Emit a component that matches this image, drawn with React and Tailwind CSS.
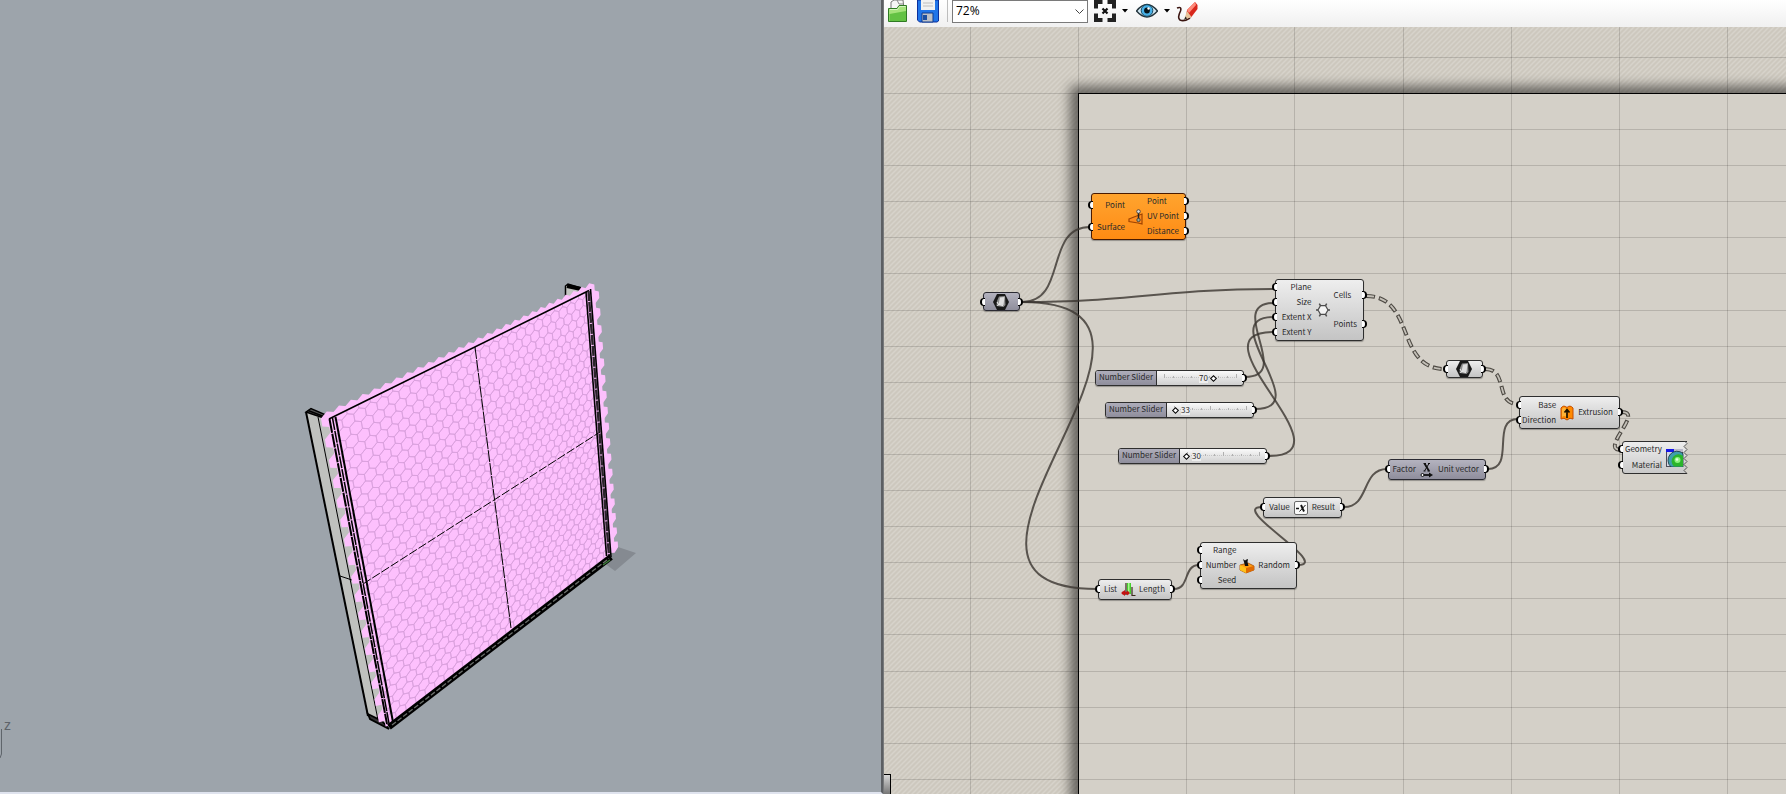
import React, { useState } from 'react';

const gripBase = 'absolute top-1/2 -mt-1 h-2 w-[5px] border border-black bg-white';

const Grip = ({ side }) => (
  <span
    className={
      side === 'left'
        ? `${gripBase} -left-[4px] rounded-l-full border-r-0 border-l-2`
        : `${gripBase} -right-[4px] rounded-r-full border-r-2 border-l-0`
    }
  />
);

const BrepIcon = () => (
  <svg width="18" height="16" viewBox="0 0 18 16">
    <polygon points="5,0 13,0 17,8 13,16 5,16 1,8" fill="#191919" />
    <polygon points="7,2.500 13,2 13.500,11 11.500,13 4.500,12 5,7" fill="#8d8d8d" />
    <polygon points="8,3.500 12.500,3 11.500,11 6.500,10.500" fill="#dedede" />
    <path d="M5 8L6.500 10.500L5.500 12M6.500 10.500L11 11.500" stroke="#f0f0f0" strokeWidth="1" fill="none" />
  </svg>
);

const ClosestIcon = () => (
  <svg width="16" height="16" viewBox="0 0 16 16">
    <path d="M1 10L6 8L14 5V15L10 14L1 12.500Z" fill="#ff8b1c" stroke="#a04400" strokeWidth="1.2" />
    <path d="M10.5 3V10" stroke="#222" strokeWidth="1.5" />
    <circle cx="10.5" cy="2.5" r="1.8" fill="#ddd" stroke="#333" strokeWidth=".8" />
    <circle cx="10.5" cy="11" r="1.7" fill="#9a9" stroke="#333" strokeWidth=".8" />
  </svg>
);

const HexIcon = () => (
  <svg width="14" height="14" viewBox="0 0 14 14">
    <path d="M4.500 2.700L9.500 2.700L12 7L9.500 11.300L4.500 11.300L2 7Z" fill="#f4f4f4" stroke="#4c4c4c" strokeWidth="1.2" />
    <path d="M4.500 2.700L3.300 .7M9.500 2.700L10.700 .7M12 7H14M9.500 11.300L10.700 13.300M4.500 11.300L3.300 13.300M2 7H0" stroke="#4c4c4c" strokeWidth="1.5" />
  </svg>
);

const ExtrudeIcon = () => (
  <svg width="14" height="16" viewBox="0 0 14 16">
    <path d="M1 3Q3.500 -.5 7 2.500Q10 -.5 13 3V14Q10 12 7 15Q4 12 1 14Z" fill="#ff8a00" stroke="#c44d00" strokeWidth="1" />
    <path d="M2 4Q4 1 6.500 4V12Q4 10 2 12Z" fill="#ffb338" />
    <path d="M7 5V13M4.500 7.500L7 4.500L9.500 7.500" stroke="#1c1200" strokeWidth="1.7" fill="none" />
  </svg>
);

const PreviewIcon = () => (
  <svg width="18" height="18" viewBox="0 0 18 18">
    <rect x=".5" y=".5" width="16" height="17" fill="#d3d8e6" stroke="#4d4d58" />
    <rect x="0" y="0" width="17" height="3" fill="#b9b9c8" />
    <rect x="0" y="0" width="8" height="3" fill="#1717e8" />
    <path d="M17 4.500V18H5A8 8 0 0 1 17 4.500Z" fill="#3f9fae" stroke="#15323c" strokeWidth=".8" />
    <path d="M17 7V17.500H8A6 6 0 0 1 17 7Z" fill="#2bb52b" />
    <circle cx="11.500" cy="11" r="3" fill="#8cf37c" />
    <circle cx="11" cy="10.500" r="1.300" fill="#e4ffe0" />
  </svg>
);

const UnitXIcon = () => (
  <svg width="14" height="16" viewBox="0 0 14 16">
    <path d="M4.500 1.500L9 9" stroke="#111" strokeWidth="1.800" />
    <path d="M9 1.500L4.500 9" stroke="#111" strokeWidth="1" />
    <path d="M3.500 1.500H6M8 1.500H10M3.500 9H5.500M7.500 9H10" stroke="#111" strokeWidth="1" />
    <path d="M3 13H10" stroke="#111" strokeWidth="1.800" />
    <path d="M9 10.500L13 13L9 15.500Z" fill="#111" />
    <circle cx="2.500" cy="13" r="1.500" fill="#fff" stroke="#111" />
  </svg>
);

const NegateIcon = () => (
  <svg width="14" height="14" viewBox="0 0 14 14">
    <rect x=".5" y=".5" width="13" height="13" rx="1.500" fill="#fafafa" stroke="#6a6a6a" />
    <path d="M2 7.500H5" stroke="#111" strokeWidth="1.500" />
    <path d="M7 4L10 10.500" stroke="#111" strokeWidth="1.900" />
    <path d="M11.500 4L5.500 10.500" stroke="#111" strokeWidth="1" />
  </svg>
);

const RandomIcon = () => (
  <svg width="16" height="16" viewBox="0 0 16 16">
    <polygon points="1,7 9,5 15,8 15,12 7,15 1,12" fill="#ff9d12" stroke="#a84d00" strokeWidth=".8" />
    <polygon points="7,10 15,8 15,12 7,15" fill="#e06a00" />
    <polygon points="1,7 7,10 7,15 1,12" fill="#ffc21a" />
    <path d="M4 1L6 2.500L7.500 1.500L9 1L8.500 4L9.500 8H6L5 4Z" fill="#111" />
  </svg>
);

const ListIcon = () => (
  <svg width="15" height="15" viewBox="0 0 15 15">
    <rect x="6" y="1" width="4" height="11" fill="#45d02c" />
    <rect x="7" y="1" width="1.500" height="11" fill="#a8f590" />
    <path d="M5 1V13M11 5V13.500H14.500" stroke="#3b2a1c" strokeWidth="1.200" fill="none" />
    <path d="M1 11H8" stroke="#c31212" strokeWidth="2.500" />
    <path d="M0 11L4 8V14ZM9 11L6 8.500V13.500Z" fill="#c31212" />
  </svg>
);

// Component capsules on the canvas
const nodes = [
  { id: 'surface', x: 99, y: 265, w: 37, h: 19, tone: 'selected', icon: <BrepIcon />, inputs: [''], outputs: [''] },
  { id: 'closest', x: 207, y: 166, w: 95, h: 47, tone: 'warning', icon: <ClosestIcon />, inputs: ['Point', 'Surface'], outputs: ['Point', 'UV Point', 'Distance'] },
  { id: 'hexgrid', x: 391, y: 252, w: 89, h: 62, tone: 'normal', icon: <HexIcon />, inputs: ['Plane', 'Size', 'Extent X', 'Extent Y'], outputs: ['Cells', 'Points'] },
  { id: 'cells', x: 562, y: 333, w: 37, h: 18, tone: 'normal', icon: <BrepIcon />, inputs: [''], outputs: [''] },
  { id: 'extrude', x: 635, y: 369, w: 101, h: 33, tone: 'normal', icon: <ExtrudeIcon />, inputs: ['Base', 'Direction'], outputs: ['Extrusion'] },
  { id: 'unit', x: 504, y: 432, w: 98, h: 21, tone: 'selected', icon: <UnitXIcon />, inputs: ['Factor'], outputs: ['Unit vector'] },
  { id: 'negate', x: 379, y: 470, w: 79, h: 21, tone: 'normal', icon: <NegateIcon />, inputs: ['Value'], outputs: ['Result'] },
  { id: 'random', x: 316, y: 515, w: 97, h: 47, tone: 'normal', icon: <RandomIcon />, inputs: ['Range', 'Number', 'Seed'], outputs: ['Random'] },
  { id: 'list', x: 214, y: 552, w: 74, h: 21, tone: 'normal', icon: <ListIcon />, inputs: ['List'], outputs: ['Length'] },
];

const tones = {
  normal: 'border-[#2e2e2e] bg-linear-to-b from-[#eeeeee] to-[#c4c4c4]',
  selected: 'border-[#2b2b33] bg-linear-to-b from-[#b4b3bf] to-[#8f8e9c]',
  warning: 'border-[#4a1a00] bg-linear-to-b from-[#ffa42e] to-[#ff8b12]',
};

const Node = ({ node }) => {
  const bare = node.inputs[0] === '';
  return (
    <div
      className={`absolute flex items-stretch rounded-[3px] border shadow-[0_1px_1px_rgba(0,0,0,0.3)] ${
        bare ? 'justify-center' : 'justify-between'
      } ${tones[node.tone]}`}
      style={{ left: node.x, top: node.y, width: node.w, height: node.h }}
    >
      <ul className={bare ? 'absolute inset-y-0 left-0 flex flex-col' : 'flex min-w-0 flex-1 flex-col pb-px'}>
        {node.inputs.map((name) => (
          <li key={name} className="relative flex flex-1 items-center justify-end">
            <Grip side="left" />
            {name}
          </li>
        ))}
      </ul>
      <div className={bare ? 'flex items-center' : 'flex w-[22px] shrink-0 items-center justify-center'}>{node.icon}</div>
      <ul className={bare ? 'absolute inset-y-0 right-0 flex flex-col' : 'flex flex-col pb-px'}>
        {node.outputs.map((name) => (
          <li key={name} className={`relative flex flex-1 items-center ${bare ? '' : 'pr-1.5'}`}>
            {name}
            <Grip side="right" />
          </li>
        ))}
      </ul>
    </div>
  );
};

// Custom preview capsule, the right side has a torn edge instead of outputs
const PreviewNode = () => (
  <div className="absolute top-[414px] left-[738px] flex h-[33px] w-[66px]">
    <svg className="absolute inset-0" width="66" height="33" viewBox="0 0 66 33">
      <defs>
        <linearGradient id="capsule" x1="0" y1="0" x2="0" y2="1">
          <stop offset="0" stopColor="#eeeeee" />
          <stop offset="1" stopColor="#c8c8c8" />
        </linearGradient>
      </defs>
      <path
        d="M65 .5H3Q.5 .5 .5 3V30Q.5 32.500 3 32.500H65L62 29.500L65 26.500L62 23.500L65 20.500L62 17.500L65 14.500L62 11.500L65 8.500L62 5.500L65 2.500Z"
        fill="url(#capsule)"
      />
      <path d="M65 .5H3Q.5 .5 .5 3V30Q.5 32.500 3 32.500H65" fill="none" stroke="#2e2e2e" />
      <path
        d="M65 32.500L62 29.500L65 26.500L62 23.500L65 20.500L62 17.500L65 14.500L62 11.500L65 8.500L62 5.500L65 2.500L63 .5"
        fill="none"
        stroke="#555"
      />
    </svg>
    <ul className="relative flex w-10 flex-col pb-px">
      {['Geometry', 'Material'].map((name) => (
        <li key={name} className="relative flex flex-1 items-center justify-end">
          <Grip side="left" />
          {name}
        </li>
      ))}
    </ul>
    <div className="relative ml-1 flex items-center">
      <PreviewIcon />
    </div>
  </div>
);

const sliders = [
  { id: 'size', x: 211, y: 343, min: 0, start: 70, label: 'left-[103px]', pad: 'left-[63px]' },
  { id: 'extent-x', x: 221, y: 375, min: 33, start: 33, label: 'left-[75px]', pad: 'left-[67px]' },
  { id: 'extent-y', x: 234, y: 421, min: 30, start: 30, label: 'left-[73px]', pad: 'left-[65px]' },
];

const NumberSlider = ({ slider }) => {
  const [value, setValue] = useState(slider.start);
  return (
    <div
      className="absolute flex h-4 w-[149px] rounded-[3px] border border-[#2e2e2e] bg-linear-to-b from-[#fafafa] to-[#cfcfcf] shadow-[0_1px_1px_rgba(0,0,0,0.3)]"
      style={{ left: slider.x, top: slider.y }}
    >
      <label
        htmlFor={slider.id}
        className="flex w-[61px] items-center justify-center rounded-l-[2px] border-r border-[#2e2e2e] bg-linear-to-b from-[#aeadba] to-[#8f8e9c] pb-[2px]"
      >
        Number Slider
      </label>
      <svg className="absolute top-0 left-[68px]" width="74" height="14">
        <path d="M0 6.500H73" stroke="#c4c4c4" strokeDasharray="1 1" />
        <path d="M.5 3V7M9.500 5V7M18.500 5V7M27.500 5V7M36.500 3V7M45.500 5V7M54.500 5V7M63.500 5V7M72.500 3V7" stroke="#b0b0b0" />
      </svg>
      <input
        id={slider.id}
        type="range"
        min={slider.min}
        max="100"
        value={value}
        onChange={(e) => setValue(Number(e.target.value))}
        className={`absolute top-0 h-[14px] w-[79px] appearance-none bg-transparent [&::-webkit-slider-thumb]:h-[5px] [&::-webkit-slider-thumb]:w-[5px] [&::-webkit-slider-thumb]:rotate-45 [&::-webkit-slider-thumb]:appearance-none [&::-webkit-slider-thumb]:border [&::-webkit-slider-thumb]:border-black [&::-webkit-slider-thumb]:bg-white ${slider.pad}`}
      />
      <output htmlFor={slider.id} className={`pointer-events-none absolute top-px flex h-[11px] items-center bg-[#eeeeee] ${slider.label}`}>
        {value}
      </output>
      <span className="absolute inset-y-0 right-0">
        <Grip side="right" />
      </span>
    </div>
  );
};

const wire = (x1, y1, x2, y2, d) => `M${x1} ${y1}C${x1 + d} ${y1} ${x2 - d} ${y2} ${x2} ${y2}`;

const wires = [
  wire(138, 275, 206, 200, 46),
  wire(138, 275, 390, 262, 110),
  wire(138, 275, 213, 562, 210),
  wire(361, 350, 390, 276, 50),
  wire(371, 382, 390, 290, 63),
  wire(384, 429, 390, 305, 88),
  wire(290, 562, 315, 538, 16),
  wire(414, 538, 378, 480, 34),
  wire(460, 480, 503, 442, 26),
  wire(604, 442, 634, 392, 28),
];

const treeWires = [
  wire(482, 269, 561, 342, 50),
  wire(601, 342, 634, 377, 24),
  wire(738, 385, 737, 423, 22),
];

const columns = Array.from({ length: 20 }, (_, i) => Math.floor(86.3 + i * 108.2));
const rows = Array.from({ length: 40 }, (_, i) => Math.floor(30.3 + i * 36.1));

const CanvasBackdrop = () => (
  <svg className="absolute inset-0 h-full w-full">
    <defs>
      <pattern id="hatch" width="5" height="5" patternUnits="userSpaceOnUse">
        <rect width="5" height="5" fill="#cdc8be" />
        <path d="M-1 6L6 -1M-1 1L1 -1M4 6L6 4" stroke="#d7d3cb" strokeWidth="1.500" />
      </pattern>
      <filter id="soft" x="-10%" y="-10%" width="120%" height="120%">
        <feGaussianBlur stdDeviation="6" />
      </filter>
    </defs>
    <rect width="100%" height="100%" fill="url(#hatch)" />
    <rect x="186" y="59" width="2000" height="2000" fill="#000" opacity=".5" filter="url(#soft)" />
    <rect x="194.500" y="66.500" width="2000" height="2000" fill="#d4d0c8" />
    <g stroke="#000" strokeOpacity=".14" shapeRendering="crispEdges">
      {columns.map((x) => (
        <line key={x} x1={x + 0.5} x2={x + 0.5} y1="0" y2="100%" />
      ))}
      {rows.map((y) => (
        <line key={y} y1={y + 0.5} y2={y + 0.5} x1="0" x2="100%" />
      ))}
    </g>
    <rect x="194.500" y="66.500" width="2000" height="2000" fill="none" stroke="#000" />
    <g fill="none" stroke="#3a352f" strokeOpacity=".8" strokeWidth="2">
      {wires.map((d) => (
        <path key={d} d={d} />
      ))}
    </g>
    {treeWires.map((d) => (
      <g key={d} fill="none">
        <path d={d} stroke="#4d4943" strokeWidth="4" strokeDasharray="9 4" />
        <path d={d} stroke="#c4c0b8" strokeWidth="1.800" strokeDasharray="7 6" strokeDashoffset="-1" />
      </g>
    ))}
  </svg>
);

// Projects (u, v) on the wall to the viewport, both from 0 to 1
const corners = { a: [333, 417], b: [590, 290], c: [611, 557], d: [391, 728] };

const project = (u, v) => {
  const [x0, y0] = corners.a;
  const [x1, y1] = corners.b;
  const [x2, y2] = corners.c;
  const [x3, y3] = corners.d;
  const dx1 = x1 - x2;
  const dx2 = x3 - x2;
  const dx3 = x0 - x1 + x2 - x3;
  const dy1 = y1 - y2;
  const dy2 = y3 - y2;
  const dy3 = y0 - y1 + y2 - y3;
  const det = dx1 * dy2 - dx2 * dy1;
  const g = (dx3 * dy2 - dx2 * dy3) / det;
  const h = (dx1 * dy3 - dx3 * dy1) / det;
  const w = g * u + h * v + 1;
  return [
    ((x1 - x0 + g * x1) * u + (x3 - x0 + h * x3) * v + x0) / w,
    ((y1 - y0 + g * y1) * u + (y3 - y0 + h * y3) * v + y0) / w,
  ];
};

const COLS = 27;
const ROWS = 34;

const hexagons = [];
for (let r = 0; r < ROWS; r++) {
  for (let c = 0; c <= COLS; c++) {
    const u = ((c + (r % 2 ? 0.5 : 0)) / COLS) * 1.014 - 0.014;
    const v = r / ROWS;
    const points = [0, 1, 2, 3, 4, 5].map((k) => {
      const angle = (Math.PI / 3) * k + Math.PI / 6;
      const [x, y] = project(u + (Math.cos(angle) * 0.585) / COLS, v + (Math.sin(angle) * 0.667) / ROWS);
      return `${x.toFixed(1)},${y.toFixed(1)}`;
    });
    hexagons.push(points.join(' '));
  }
}

const Viewport = () => (
  <section className="relative w-[49.44%] shrink-0 overflow-hidden border-r-2 border-b-2 border-r-[#5c5f63] border-b-[#dfe3ee] bg-[#9da4ab]">
    <svg className="absolute top-0 left-0" width="881" height="792" viewBox="0 0 881 792">
      <polygon points="607,551 618,547 636,553 615,571 604,563" fill="#858a91" />
      <polygon points="306,412 311,408 326,415 345,440 393,725 381,722 368,716" fill="#bfc1be" />
      <polygon points="565,286 568,284 581,288 580,296 565,300" fill="#c3c5c2" />
      <path d="M565.500 297V286L568 284L581 288" fill="none" stroke="#000" strokeWidth="1.500" />
      <path d="M567 286L581 289" stroke="#000" strokeWidth="4" />
      <path d="M306 412L311 408.500L326 415L324 418Z" fill="#555" stroke="#000" strokeWidth="1.500" />
      <path d="M308 410.500L325 417" stroke="#000" strokeWidth="1.500" />
      <path d="M306 412L368 716" stroke="#000" strokeWidth="2" />
      <path d="M318 417L378 720" stroke="#000" strokeWidth="1" />
      <path d="M340 576L355 581" stroke="#000" strokeWidth="1" />
      <path d="M368 714L370 719L389 729L382 721Z" fill="#333" stroke="#000" strokeWidth="1.800" />
      <polygon points="330,416 590,288 611,557 391,727" fill="#fdc0fd" />
      <g fill="#fdc0fd">
        {hexagons.map((points) => (
          <polygon key={points} points={points} stroke="#fdc0fd" strokeWidth="1.5" />
        ))}
      </g>
      <clipPath id="wall">
        <polygon points="333,417 590,290 611,557 391,728" />
      </clipPath>
      <g fill="none" stroke="#d8a0dc" strokeWidth=".8" clipPath="url(#wall)">
        {hexagons.map((points) => (
          <polygon key={points} points={points} />
        ))}
      </g>
      <path d="M329 419L335 416L589 290.500" fill="none" stroke="#000" strokeWidth="1.600" />
      <g stroke="#000" fill="none">
        <path d="M329.500 419L387 724" strokeWidth="2" strokeDasharray="14 1" />
        <path d="M332.500 418L389.500 726" strokeWidth="1.500" strokeDasharray="12 1" />
        <path d="M335.500 417L393 722" strokeWidth="2" />
        <path d="M586 292L606.500 556" strokeWidth="1.600" />
        <path d="M588.500 291L609 556" strokeWidth="2.400" strokeDasharray="10 1" stroke="#2b242b" />
        <path d="M590.500 289L611 557" strokeWidth="1.600" />
        <path d="M475 347L511 628" strokeDasharray="12 1" />
        <path d="M363 584L600 432" strokeDasharray="9 2" />
      </g>
      <path d="M389 727L611 557" stroke="#000" strokeWidth="6" />
      <path d="M392 725L609 558.500" stroke="#6a6e6a" strokeWidth="1.300" strokeDasharray="5 2" />
      <path d="M603 565L610 560" stroke="#3b7d38" strokeWidth="1.500" />
      <path d="M1.500 729V754L0 758" fill="none" stroke="#5f656b" strokeWidth="1" />
    </svg>
    <span className="absolute bottom-[60px] left-1 font-['Liberation_Sans'] text-sm leading-none text-[#5d636a]">z</span>
  </section>
);

const Caret = () => (
  <svg width="6" height="4" viewBox="0 0 6 4">
    <path d="M0 0H6L3 3.500Z" fill="#000" />
  </svg>
);

const Toolbar = () => (
  <header className="flex h-[27px] shrink-0 items-start bg-linear-to-b from-white to-[#f0f0f0] pl-1">
    <button type="button" aria-label="Open" className="mr-[9px]">
      <svg width="20" height="23" viewBox="0 0 20 23">
        <path d="M3 9V2L6 0H15L16 9Z" fill="#f6f6f6" stroke="#777" />
        <path d="M9 0L11 4H15" fill="none" stroke="#888" />
        <path d="M.5 21.500V8.500H9L11 5.500H18.500V21.500Z" fill="#a5e37c" stroke="#2f7a24" />
        <path d="M1.500 14L18 11V21H1.500Z" fill="#63c244" />
        <path d="M2 9.500H9.500L11.500 6.500H17.500" stroke="#d2f5bd" fill="none" />
      </svg>
    </button>
    <button type="button" aria-label="Save" className="mr-2">
      <svg width="22" height="23" viewBox="0 0 22 23">
        <path d="M0.500 0H21.500V21L20 22H2.500L.5 20Z" fill="#2075e8" stroke="#0a2f9c" />
        <path d="M4 0H18V10H4Z" fill="#f1f1f1" />
        <path d="M6 3H16M6 6H16" stroke="#bdbdbd" />
        <path d="M5 13H16V22H5Z" fill="#bcc0c6" stroke="#0f3c90" />
        <rect x="6" y="15" width="4" height="5" fill="#1b4ea0" />
      </svg>
    </button>
    <div className="mr-1 h-[22px] w-px bg-[#bdbdbd]" />
    <div className="relative mr-[6px] w-[136px]">
      <select
        aria-label="Zoom"
        defaultValue="72"
        className="block h-[23px] w-full appearance-none border border-[#7a7a7a] bg-white pl-[3px] pb-px font-['Open_Sans',sans-serif] text-xs text-black"
      >
        <option value="72">72%</option>
        <option value="100">100%</option>
        <option value="150">150%</option>
      </select>
      <svg className="pointer-events-none absolute top-2 right-1" width="9" height="7" viewBox="0 0 9 7">
        <path d="M.5 1.500L4.500 5.500L8.500 1.500" fill="none" stroke="#444" />
      </svg>
    </div>
    <button type="button" aria-label="Zoom extents" className="flex h-[22px] items-center gap-[6px]">
      <svg width="22" height="22" viewBox="0 0 22 22">
        <path d="M2 8.500V2H8.500M13.500 2H20V8.500M20 13.500V20H13.500M8.500 20H2V13.500" fill="none" stroke="#222" strokeWidth="4" />
        <path d="M8.500 8.500L13.500 13.500M13.500 8.500L8.500 13.500" stroke="#111" strokeWidth="2.200" />
      </svg>
      <Caret />
    </button>
    <button type="button" aria-label="Named views" className="ml-2 flex h-[22px] items-center gap-[6px]">
      <svg width="22" height="16" viewBox="0 0 22 16">
        <path d="M.5 8Q11 -5 21.500 8Q11 20 .5 8Z" fill="#cfe6f1" stroke="#21323a" strokeWidth="1.300" />
        <circle cx="11" cy="7.500" r="5.800" fill="#47b1e8" stroke="#15475f" />
        <circle cx="11" cy="7.500" r="2.900" fill="#06151c" />
        <circle cx="12.500" cy="5.500" r="1.200" fill="#fff" />
      </svg>
      <Caret />
    </button>
    <button type="button" aria-label="Sketch" className="ml-[6px]">
      <svg width="22" height="23" viewBox="0 0 22 23">
        <path d="M1 8Q6 6 4.500 11Q1 18 4 20Q8 22 14 18" fill="none" stroke="#3a1410" strokeWidth="1.600" />
        <path d="M10 17L11 10L19 2L21.500 5V9L15 17.500Z" fill="#d8271c" />
        <path d="M11 10L19 2L20 5L13 13Z" fill="#ff8a7a" />
        <path d="M8 20L11 11L15.500 17Z" fill="#e7c49a" />
        <path d="M8 20L9.500 16.500L11 18.500Z" fill="#222" />
      </svg>
    </button>
  </header>
);

const App = () => {
  return (
    <div className="flex h-screen overflow-hidden bg-[#e6e9f2]">
      <Viewport />
      <main className="flex min-w-0 grow flex-col border-l border-[#77797b]">
        <Toolbar />
        <div className="relative grow overflow-hidden font-['Noto_Sans_CJK_SC',sans-serif] text-[8px] leading-none whitespace-nowrap text-[#2a2a2a]">
          <CanvasBackdrop />
          {nodes.map((node) => (
            <Node key={node.id} node={node} />
          ))}
          <PreviewNode />
          {sliders.map((slider) => (
            <NumberSlider key={slider.id} slider={slider} />
          ))}
          <div className="absolute bottom-0 left-0 h-5 w-[7px] border-t border-r border-black bg-linear-to-b from-[#d8d8d8] to-[#777]" />
        </div>
      </main>
    </div>
  );
};

export default App;
